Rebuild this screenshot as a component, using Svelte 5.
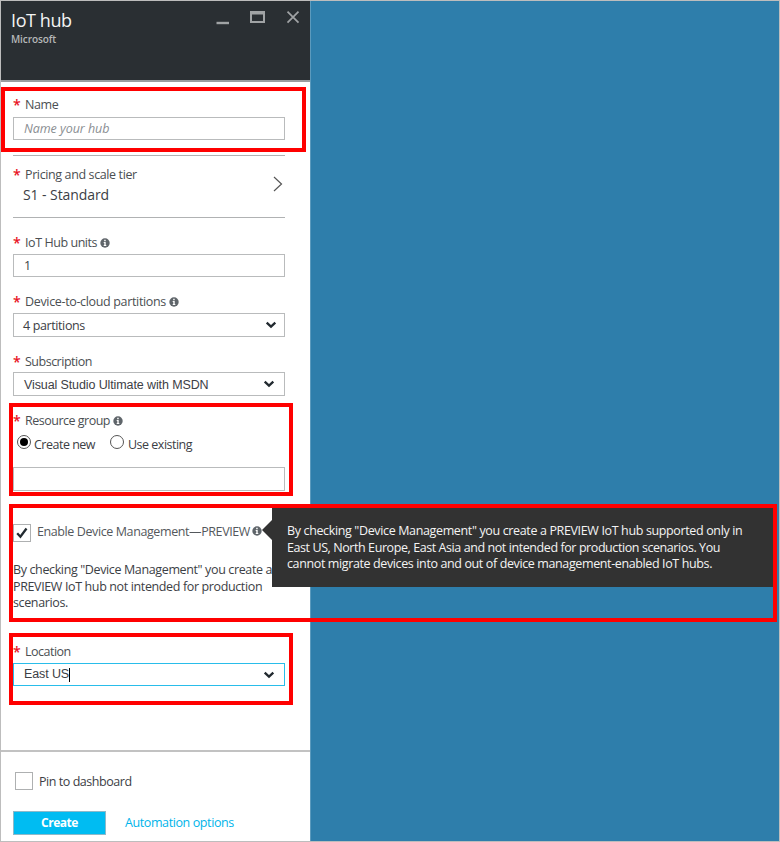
<script>
  const regions = ['name', 'group', 'device', 'location'];
</script>

{#snippet info()}
  <svg class="info" width="10" height="10" viewBox="0 0 10 10">
    <circle cx="5" cy="5" r="4.7" fill="#5f656a" />
    <path d="M4.2 1.8h1.5v1.4H4.2zM3.7 4.1h2v3h.6v.9H3.7v-.9h.6V5h-.6z" fill="#fff" />
  </svg>
{/snippet}

{#snippet caret()}
  <svg class="caret" width="12" height="8" viewBox="0 0 12 8">
    <path d="M1.7 1.6 6 5.6l4.3-4" fill="none" stroke="#222a30" stroke-width="2.3" />
  </svg>
{/snippet}

{#snippet label(text, cls, hint)}
  <div class="label {cls}">
    <span class="star">*</span><span class="caption">{text}</span>
    {#if hint}{@render info()}{/if}
  </div>
{/snippet}

<div class="screen">
  <section class="blade">
    <header>
      <div class="titles">
        <h1>IoT hub</h1>
        <p>Microsoft</p>
      </div>
      <svg class="controls" width="86" height="16" viewBox="0 0 86 16">
        <path d="M.5 14h12.500" stroke="#a0a3a5" stroke-width="2.400" />
        <path d="M34 2h15v12H34zM36 5.500v6.500h11V5.500z" fill="#a0a3a5" fill-rule="evenodd" />
        <path d="m71.500 2.700 11 11m0-11-11 11" stroke="#a0a3a5" stroke-width="1.7" />
      </svg>
    </header>

    <main>
      {@render label('Name', 'l-name', false)}
      <div class="field short placeholder"><span>Name your hub</span></div>

      <div class="tier">
        <div>
          {@render label('Pricing and scale tier', 'l-tier', false)}
          <div class="value">S1 - Standard</div>
        </div>
        <svg width="10" height="16" viewBox="0 0 10 16">
          <path d="m1 1 7.500 7L1 15" fill="none" stroke="#555" stroke-width="1.2" />
        </svg>
      </div>

      {@render label('IoT Hub units', 'l-units', true)}
      <div class="field short"><span>1</span></div>

      {@render label('Device-to-cloud partitions', 'l-part', true)}
      <div class="field part"><span>4 partitions</span>{@render caret()}</div>

      {@render label('Subscription', 'l-sub', false)}
      <div class="field arial sub"><span>Visual Studio Ultimate with MSDN</span>{@render caret()}</div>

      {@render label('Resource group', 'l-group', true)}
      <div class="radios">
        <i class="radio on"></i><span class="new">Create new</span>
        <i class="radio"></i><span class="existing">Use existing</span>
      </div>
      <div class="field blank"></div>

      <div class="enable">
        <i class="box">
          <svg width="12" height="12" viewBox="0 0 12 12"><path d="M1.200 6.300 4.400 9.700 10.500 1.500" fill="none" stroke="#222a30" stroke-width="2.300" /></svg>
        </i>
        <span>Enable Device Management—PREVIEW</span>
        {@render info()}
      </div>
      <p class="note">
        By checking "Device Management" you create a<br />
        PREVIEW IoT hub not intended for production<br />
        scenarios.
      </p>

      {@render label('Location', 'l-loc', false)}
      <div class="field short arial focus"><span>East US</span><i class="cursor"></i>{@render caret()}</div>
    </main>

    <footer>
      <div class="pin"><i class="box"></i><span>Pin to dashboard</span></div>
      <div class="actions"><button>Create</button><a href="#automation">Automation options</a></div>
    </footer>
  </section>

  <aside class="tooltip">
    <div class="t1">By checking "Device Management" you create a PREVIEW IoT hub supported only in</div>
    <div class="t2">East US, North Europe, East Asia and not intended for production scenarios. You</div>
    <div class="t3">cannot migrate devices into and out of device management-enabled IoT hubs.</div>
  </aside>

  {#each regions as region}
    <div class="mark {region}"></div>
  {/each}
</div>

<style>
  * { box-sizing: border-box; }
  .screen {
    position: relative;
    width: 780px;
    height: 842px;
    border: 1px solid #bdbdbd;
    background: #2e7eab;
    font: 12.5px/17px "Open Sans", "Noto Sans", sans-serif;
    letter-spacing: -0.38px;
    color: #3c4045;
    white-space: nowrap;
    overflow: hidden;
  }
  h1, p { margin: 0; font-weight: 400; }
  svg { display: block; flex: none; }
  .blade {
    width: 310px;
    height: 840px;
    background: #fff;
    border-right: 1px solid #5b9abd;
    display: flex;
    flex-direction: column;
  }
  header {
    height: 81px;
    flex: none;
    display: flex;
    justify-content: space-between;
    padding: 7px 10px 0;
    background: #2a2f33;
    border-bottom: 2px solid #999c9e;
  }
  h1 { font-size: 18px; line-height: 24px; letter-spacing: -0.4px; color: #f4f4f4; }
  header p { font-size: 10px; line-height: 14px; color: #b5b7b8; font-weight: 600; letter-spacing: -0.1px; }
  .controls { margin: 1px -2px 0 0; }
  main { flex: 1; padding: 0 12px; width: 296px; }
  .label { display: flex; align-items: center; height: 17px; color: #4b4f53; }
  .star { width: 12px; color: #e81123; font-size: 14px; font-weight: 600; line-height: 17px; }
  .info { margin-left: 3px; }
  .field {
    width: 272px;
    height: 24px;
    border: 1px solid #b9bbbc;
    padding: 0 8px 0 10px;
    display: flex;
    align-items: center;
  }
  .short { height: 23px; }
  .caret { margin-left: auto; }
  .arial { font-family: "Liberation Sans", Arial, sans-serif; letter-spacing: -0.11px; padding-right: 9px; }
  .sub span { margin-top: 2px; }
  .part { padding-left: 9px; padding-right: 7px; }
  .placeholder { font-style: italic; color: #8a8e92; letter-spacing: -0.05px; }
  .l-name { margin-top: 14px; margin-bottom: 4px; }
  .tier {
    margin-top: 15px;
    height: 63px;
    width: 272px;
    border-top: 1px solid #b0b2b3;
    border-bottom: 1px solid #b0b2b3;
    display: flex;
    justify-content: space-between;
    padding: 10px 2px 0 0;
  }
  .tier svg { margin-top: 10px; }
  .value { font-size: 14px; line-height: 20px; letter-spacing: -0.08px; padding: 2px 0 0 10px; }
  .l-units { margin: 16px 0 3px; letter-spacing: -0.44px; }
  .l-part { margin: 16px 0 3px; letter-spacing: -0.34px; }
  .l-sub { margin: 16px 0 2px; letter-spacing: -0.5px; }
  .l-group { margin: 16px 0 0; letter-spacing: -0.5px; }
  .radios { display: flex; height: 30px; padding: 6px 0 0 4px; letter-spacing: -0.5px; }
  .radio { width: 14px; height: 14px; border: 1px solid #555; border-radius: 50%; display: flex; }
  .radio.on::after { content: ''; width: 8px; height: 8px; margin: 2px; border-radius: 50%; background: #000; }
  .radios span { margin: 1px 0 0 3px; }
  .radios .new { width: 76px; }
  .radios .existing { margin-left: 4px; }
  .blank { margin-top: 8px; }
  .enable { display: flex; margin-top: 33px; height: 19px; letter-spacing: -0.4px; }
  .box { width: 18px; height: 18px; border: 1px solid #aeb0b1; display: flex; align-items: center; justify-content: center; flex: none; }
  .enable .box { margin-top: 0; }
  .enable span { margin: -1px 0 0 6px; color: #54585c; }
  .enable .info { margin: 2px 0 0 2px; }
  .note { margin-top: 19px; line-height: 16.700px; letter-spacing: -0.37px; }
  .l-loc { margin: 31px 0 3px; letter-spacing: -0.5px; }
  .focus { border-color: #29bdea; }
  .cursor { width: 1px; height: 14px; background: #000; }
  footer { height: 91px; flex: none; border-top: 2px solid #c2c2c2; }
  .pin { display: flex; padding: 20px 0 0 14px; height: 59px; letter-spacing: -0.45px; }
  .pin span { margin: 1px 0 0 6px; }
  .actions { display: flex; padding-left: 12px; letter-spacing: -0.4px; }
  button { width: 93px; height: 24px; border: 1px solid #8db9c9; background: #00bcf2; color: #fff; font: inherit; font-size: 12px; font-weight: 700; letter-spacing: -0.45px; padding: 0 0 2px; }
  a { margin: 3px 0 0 19px; color: #00b4ea; text-decoration: none; }
  .tooltip {
    position: absolute;
    left: 271px;
    top: 507px;
    width: 501px;
    height: 79px;
    background: #323232;
    color: #f4f4f4;
    padding: 15px 15px 0;
    line-height: 16.700px;
  }
  .tooltip::before {
    content: '';
    position: absolute;
    left: -10px;
    top: 12px;
    border: 10px solid transparent;
    border-left: 0;
    border-right-color: #323232;
  }
  .t1 { letter-spacing: -0.36px; }
  .t2 { letter-spacing: -0.42px; }
  .mark { position: absolute; border: 4px solid #f00; }
  .mark.name { left: 0; top: 86px; width: 305px; height: 65px; }
  .mark.group { left: 8px; top: 402px; width: 284px; height: 93px; }
  .mark.device { left: 8px; top: 503px; width: 768px; height: 118px; }
  .mark.location { left: 8px; top: 632px; width: 284px; height: 72px; }
</style>
